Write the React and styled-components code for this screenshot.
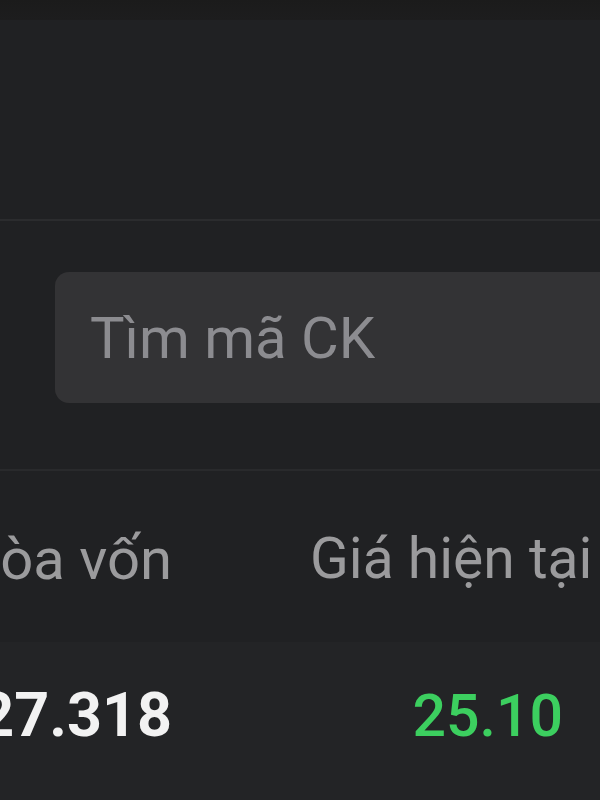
import React from 'react';
import styled, { createGlobalStyle } from 'styled-components';

const GlobalStyle = createGlobalStyle`
    html, body {
        margin: 0;
        padding: 0;
        background: #202123;
        font-family: Roboto, "Noto Sans", "Liberation Sans", sans-serif;
        overflow: hidden;
    }
`;

const Page = styled.div`
    width: 600px;
    height: 800px;
    overflow: hidden;
    background: #202123;
`;

const TopStrip = styled.div`
    height: 20px;
    background: linear-gradient(#1b1b1b, #1d1d1e);
`;

const Panel = styled.div`
    height: 199px;
    background: #202123;
    border-bottom: 2px solid #2b2c2e;
`;

const SearchSection = styled.div`
    padding: 51px 0 66px 55px;
    border-bottom: 2px solid #292a2c;
`;

const SearchField = styled.input`
    display: block;
    box-sizing: border-box;
    width: 580px;
    height: 131px;
    border: none;
    outline: none;
    border-radius: 14px;
    background: #333335;
    padding: 0 0 0 35px;
    font-family: inherit;
    font-size: 58px;
    color: #e0e0e0;

    &::placeholder {
        color: #8c8c90;
    }
`;

const Row = styled.div`
    display: grid;
    grid-template-columns: 172px 391px;
    align-items: center;
    box-sizing: border-box;
    height: ${p => p.$height}px;
    padding-top: ${p => p.$drop || 0}px;
    padding-bottom: ${p => p.$lift || 0}px;
    background: ${p => p.$bg};
`;

const Cell = styled.div`
    display: flex;
    justify-content: ${p => (p.$align === 'left' ? 'flex-start' : 'flex-end')};
    padding-left: ${p => p.$indent || 0}px;
    white-space: nowrap;
    font-size: ${p => p.$size}px;
    font-weight: ${p => p.$weight || 400};
    color: ${p => p.$color};
`;

const App = () => {
    return (
        <Page>
            <GlobalStyle />
            <TopStrip />
            <Panel />
            <SearchSection>
                <SearchField placeholder="Tìm mã CK" />
            </SearchSection>
            <Row $height={171} $drop={4} $bg="#202123">
                <Cell $size={58} $color="#9b9b9d">Hòa vốn</Cell>
                <Cell $size={57} $color="#9b9b9d" $align="left" $indent={138}>Giá hiện tại</Cell>
            </Row>
            <Row $height={190} $lift={44} $bg="#232426">
                <Cell $size={61} $weight={700} $color="#f2f2f2">27.318</Cell>
                <Cell $size={59} $weight={500} $color="#3ccf5f">25.10</Cell>
            </Row>
        </Page>
    );
};

export default App;
